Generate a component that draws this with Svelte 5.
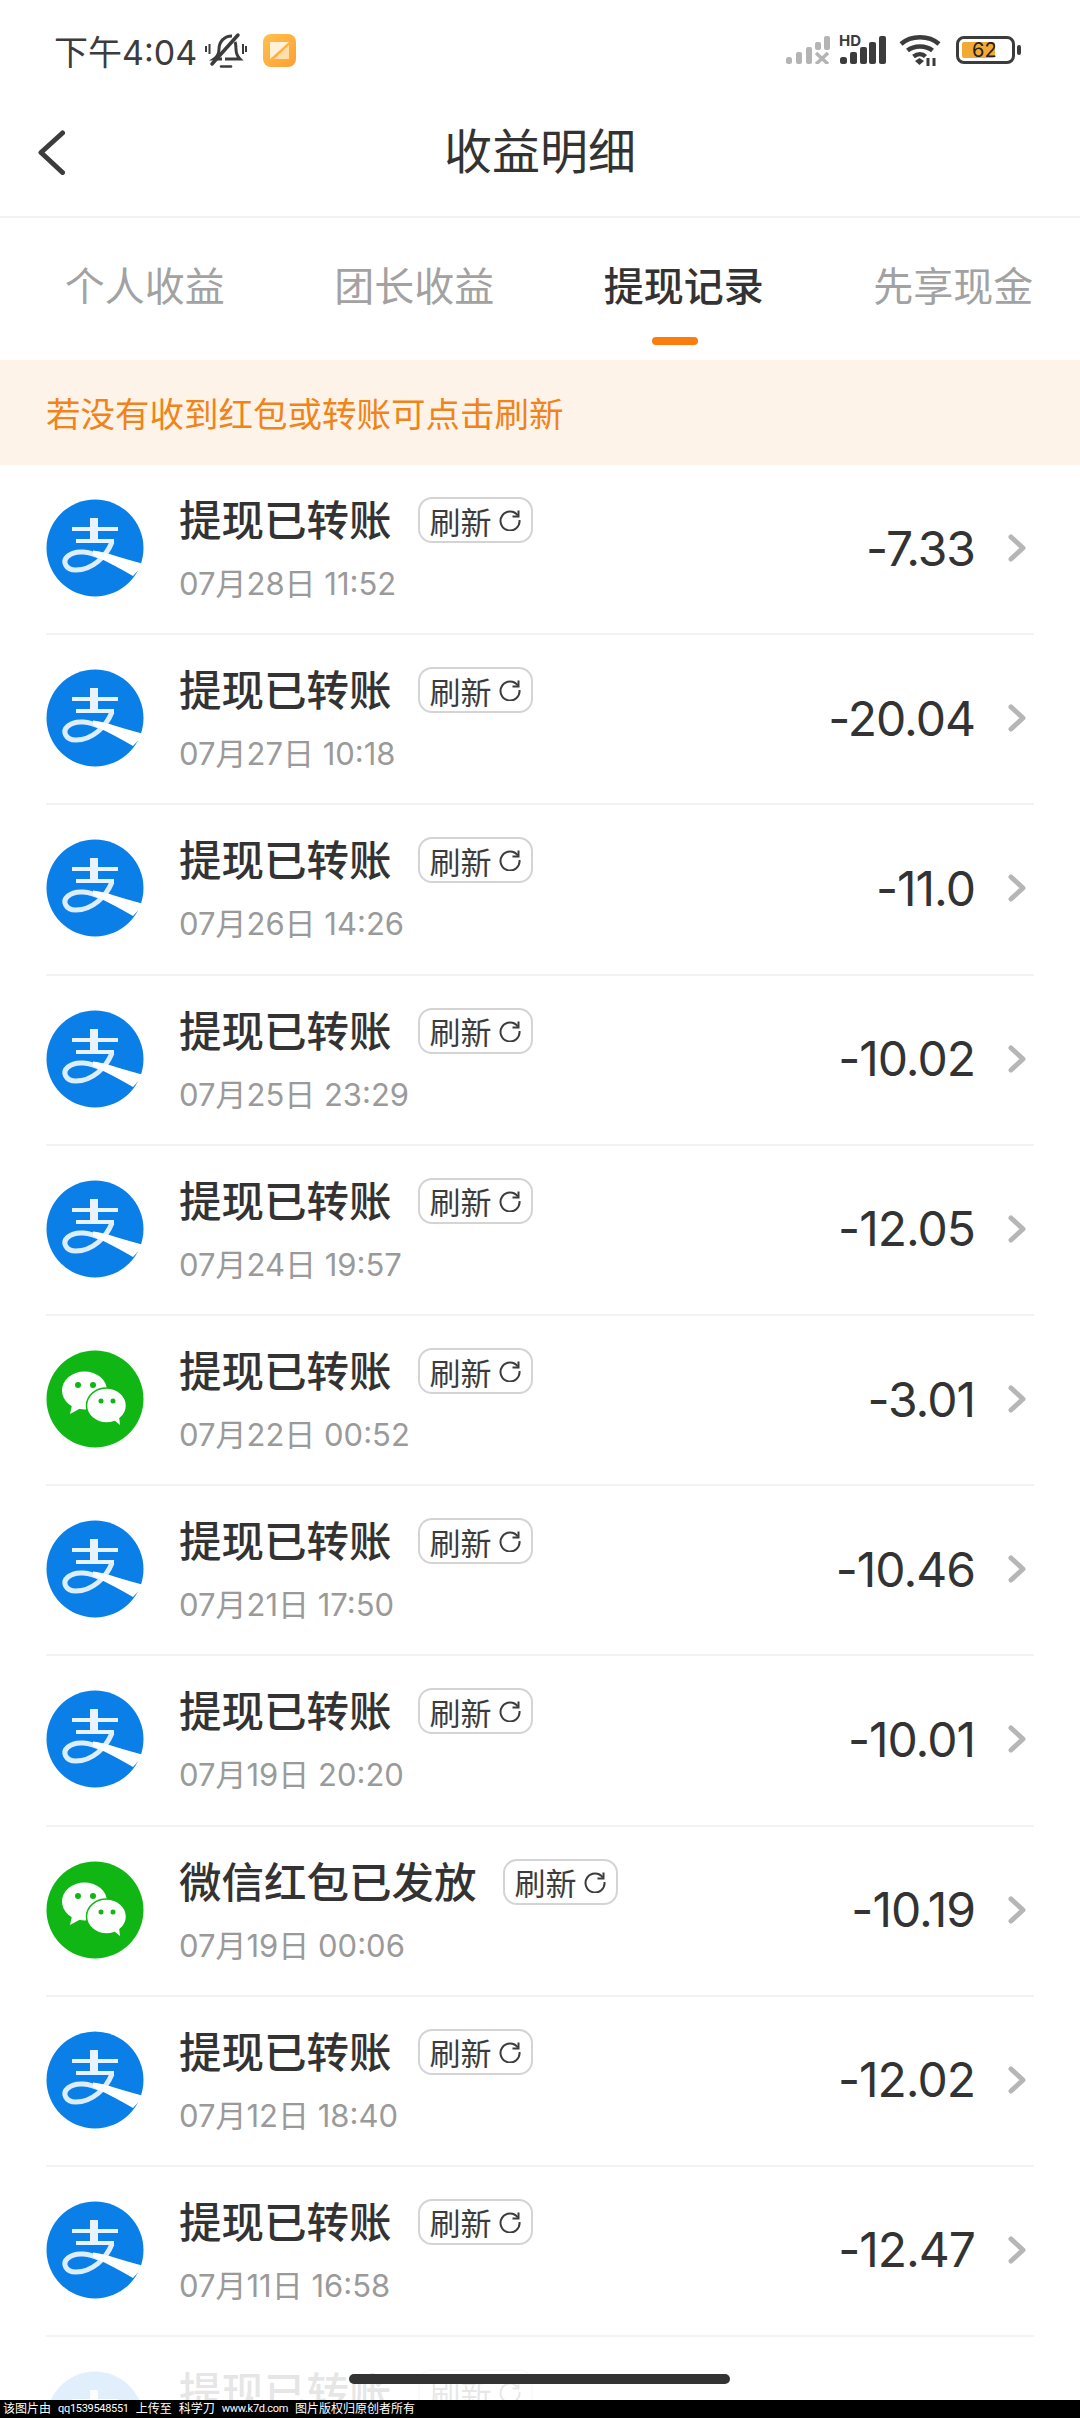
<script>
    const rows = [
        { pay: 'ali', title: '提现已转账', date: '07月28日 11:52', amount: '-7.33' },
        { pay: 'ali', title: '提现已转账', date: '07月27日 10:18', amount: '-20.04' },
        { pay: 'ali', title: '提现已转账', date: '07月26日 14:26', amount: '-11.0' },
        { pay: 'ali', title: '提现已转账', date: '07月25日 23:29', amount: '-10.02' },
        { pay: 'ali', title: '提现已转账', date: '07月24日 19:57', amount: '-12.05' },
        { pay: 'wx', title: '提现已转账', date: '07月22日 00:52', amount: '-3.01' },
        { pay: 'ali', title: '提现已转账', date: '07月21日 17:50', amount: '-10.46' },
        { pay: 'ali', title: '提现已转账', date: '07月19日 20:20', amount: '-10.01' },
        { pay: 'wx', title: '微信红包已发放', date: '07月19日 00:06', amount: '-10.19' },
        { pay: 'ali', title: '提现已转账', date: '07月12日 18:40', amount: '-12.02' },
        { pay: 'ali', title: '提现已转账', date: '07月11日 16:58', amount: '-12.47' },
        { pay: 'ali', title: '提现已转账', date: '', amount: '' } // runs off the bottom of the screen
    ];
    const tabs = ['个人收益', '团长收益', '提现记录', '先享现金'];
</script>

<div class="page">
    <div class="status">
        <span class="time">下午4:04</span>
        <svg class="bell" width="42" height="36" viewBox="0 0 42 36" fill="none" stroke="#3c3c3c">
            <path d="M17 27H9c3-2 5-5 5-10 0-7 5-13 13-13" stroke-width="3"/>
            <path d="M30 10c1 2 1 4 1 7 0 5 2 8 4 10H20" stroke-width="3"/>
            <path d="M33 3 7 32" stroke-width="3.500" stroke-linecap="round"/>
            <path d="M16 34.500h10" stroke-width="2.500" stroke-linecap="round"/>
            <path d="M1 14v6M4.500 12v10M38 12v10M41 14v6" stroke-width="2"/>
        </svg>
        <svg class="note" width="33" height="33" viewBox="0 0 33 33">
            <defs><linearGradient id="noteBg" x1="0" y1="0" x2="1" y2="1"><stop offset="0" stop-color="#ffc04d"/><stop offset="1" stop-color="#ff9f33"/></linearGradient></defs>
            <rect width="33" height="33" rx="8" fill="url(#noteBg)"/>
            <path d="M7 8h19L7 25z" fill="#fff2d8"/>
            <path d="M26 11v14H11z" fill="#ffe0ac"/>
        </svg>
        <span class="spacer"></span>
        <svg class="sig" width="44" height="28" viewBox="0 0 44 28" fill="#b4b4b4">
            <rect x="0" y="21" width="6" height="7" rx="2.500"/>
            <rect x="10" y="16" width="6" height="12" rx="2"/>
            <rect x="20" y="11" width="6" height="17" rx="2"/>
            <rect x="29" y="6" width="6" height="8" rx="2"/>
            <rect x="38" y="0" width="6" height="14" rx="2"/>
            <path d="M30 17 42 28M42 17 30 28" stroke="#b4b4b4" stroke-width="3.500"/>
        </svg>
        <span class="hd-wrap">
            <span class="hd">HD</span>
            <svg width="46" height="28" viewBox="0 0 46 28" fill="#3c3c3c">
                <rect x="0" y="21" width="7" height="7" rx="2.500"/>
                <rect x="10" y="16" width="7" height="12" rx="2"/>
                <rect x="20" y="11" width="7" height="17" rx="2"/>
                <rect x="29" y="6" width="7" height="22" rx="2"/>
                <rect x="39" y="0" width="7" height="28" rx="2"/>
            </svg>
        </span>
        <svg class="wifi" width="42" height="32" viewBox="0 0 42 32" fill="none" stroke="#3c3c3c" stroke-width="4.500">
            <path d="M2 10C12 1 30 1 40 10"/>
            <path d="M8.500 16.500C15 11 27 11 33.500 16.500"/>
            <path d="M14.500 22.500c4-3 9-3 12 0"/>
            <path d="M16 27l4.500-3 4.500 3-4.500 4z" fill="#3c3c3c" stroke="none"/>
            <path d="M29 32v-8M35 32v-8" stroke-width="3"/>
        </svg>
        <span class="battery"><span class="fill"></span><span class="pct">62</span></span>
        <span class="nub"></span>
    </div>

    <div class="nav">
        <svg class="back" width="27" height="45" viewBox="0 0 27 45" fill="none" stroke="#3c3c3c" stroke-width="5" stroke-linecap="round" stroke-linejoin="round"><path d="M24.500 3 3 22.500 24.500 42.500"/></svg>
        <span class="nav-title">收益明细</span>
    </div>

    <div class="tabs">
        {#each tabs as t, i}
            <div class="tab" class:active={i === 2}>
                <span>{t}</span>
                {#if i === 2}<i class="bar"></i>{/if}
            </div>
        {/each}
    </div>

    <div class="banner">若没有收到红包或转账可点击刷新</div>

    <div class="list">
        {#each rows as r}
            <div class="row">
                {#if r.pay === 'ali'}
                    <svg class="logo" width="98" height="98" viewBox="0 0 98 98">
                        <circle cx="49" cy="49" r="48.500" fill="#0a7fe8"/>
                        <path d="M26 30H72M30 42H68M48 19V43" stroke="#e8f3fd" stroke-width="4" fill="none"/>
                        <path d="M48 19V42" stroke="#e8f3fd" stroke-width="8" fill="none"/>
                        <path d="M66 43C60 58 46 71 30 71 19 71 16 62 22 57 30 50 44 53 55 58" stroke="#dcedfc" stroke-width="5" fill="none"/>
                        <path d="M47 51.500C60 53 78 60 98 65L87 77C75 70 62 63 47 56z" fill="#fff"/>
                    </svg>
                {:else}
                    <svg class="logo" width="98" height="98" viewBox="0 0 98 98">
                        <circle cx="49" cy="49" r="48.500" fill="#10b614"/>
                        <ellipse cx="38.500" cy="40.500" rx="22.500" ry="19" fill="#fff"/>
                        <path d="M26 55 24 64 35 58z" fill="#fff"/>
                        <ellipse cx="60.500" cy="55.500" rx="20" ry="17.500" fill="#fff" stroke="#10b614" stroke-width="1.500"/>
                        <path d="M68 70 74 75 73 66z" fill="#fff"/>
                        <circle cx="32" cy="35" r="3" fill="#10b614"/>
                        <circle cx="47" cy="35" r="3" fill="#10b614"/>
                        <circle cx="55" cy="51" r="2.500" fill="#10b614"/>
                        <circle cx="67" cy="51" r="2.500" fill="#10b614"/>
                    </svg>
                {/if}
                <div class="info">
                    <div class="line">
                        <span class="title">{r.title}</span>
                        <span class="refresh">刷新
                            <svg width="22" height="22" viewBox="0 0 22 22" fill="none" stroke="#3c3c3c" stroke-width="2"><path d="M18.800 6.500A9.500 9.500 0 1 0 20.500 11"/><path d="M19.500 1.500V7.500H13.500" stroke-width="2"/></svg>
                        </span>
                    </div>
                    <div class="date">{r.date}</div>
                </div>
                <span class="amount">{r.amount}</span>
                <svg class="chev" width="18" height="28" viewBox="0 0 18 28" fill="none" stroke="#b6b6b6" stroke-width="5" stroke-linecap="round" stroke-linejoin="round"><path d="M3 3 15 14 3 25"/></svg>
            </div>
        {/each}
    </div>

    <div class="fade"></div>
    <div class="gesture"></div>
    <div class="mark">
        <span>该图片由</span>
        <span class="latin">qq1539548551</span>
        <span>上传至</span>
        <span>科学刀</span>
        <span class="latin">www.k7d.com</span>
        <span>图片版权归原创者所有</span>
    </div>
</div>

<style>
    :global(body) {
        margin: 0;
        background: #fff;
    }
    .page {
        position: relative;
        width: 1080px;
        height: 2418px;
        overflow: hidden;
        background: #fff;
        font-family: Inter, "Noto Sans CJK SC", sans-serif;
        color: #333;
    }
    .status {
        display: flex;
        align-items: center;
        height: 100px;
        padding: 0 59px 0 54px;
        box-sizing: border-box;
        color: #3c3c3c;
    }
    .time {
        font-size: 34px;
        width: 151px;
        white-space: nowrap;
    }
    .note {
        margin-left: 16px;
    }
    .spacer {
        flex: 1;
    }
    .hd-wrap {
        position: relative;
        display: flex;
        margin-left: 10px;
    }
    .hd {
        position: absolute;
        left: -1px;
        top: -2px;
        font-size: 15px;
        font-weight: 700;
        line-height: 14px;
    }
    .wifi {
        margin-left: 13px;
    }
    .battery {
        position: relative;
        display: block;
        width: 59px;
        height: 28px;
        margin-left: 15px;
        border: 3px solid #3c3c3c;
        border-radius: 8px;
        box-sizing: border-box;
    }
    .fill {
        position: absolute;
        left: 3px;
        top: 3px;
        bottom: 3px;
        width: 33px;
        background: #f0aa35;
        border-radius: 2px;
    }
    .pct {
        position: absolute;
        left: 13px;
        top: 0;
        font-size: 20px;
        line-height: 22px;
        color: #222;
    }
    .nub {
        width: 4px;
        height: 10px;
        margin-left: 2px;
        background: #3c3c3c;
        border-radius: 2px;
    }
    .nav {
        position: relative;
        display: flex;
        align-items: center;
        justify-content: center;
        height: 95px;
        padding-bottom: 21px;
        border-bottom: 2px solid #f3f3f3;
    }
    .back {
        position: absolute;
        left: 38px;
        top: 30px;
    }
    .nav-title {
        font-size: 48px;
        color: #333;
    }
    .tabs {
        display: grid;
        grid-template-columns: repeat(4, 269.500px);
        padding: 0 10px;
        height: 142px;
    }
    .tab {
        display: flex;
        flex-direction: column;
        align-items: center;
        padding-top: 42px;
        font-size: 40px;
        line-height: 54px;
        color: #a2a2a2;
    }
    .tab.active {
        color: #333;
        font-weight: 500;
    }
    .bar {
        display: block;
        width: 46px;
        height: 8px;
        margin: 23px 18px 0 0;
        border-radius: 4px;
        background: #fb7d0e;
    }
    .banner {
        display: flex;
        align-items: center;
        height: 103px;
        padding: 0 0 2px 46px;
        background: #fef3e9;
        color: #f08319;
        font-size: 34.500px;
    }
    .row {
        display: flex;
        align-items: center;
        height: 170.200px;
        margin: 0 46px;
        padding-bottom: 2px;
        border-bottom: 2px solid #f3f3f3;
        box-sizing: border-box;
    }
    .logo {
        flex-shrink: 0;
    }
    .info {
        flex: 1;
        margin: 3px 0 0 35px;
    }
    .line {
        display: flex;
        align-items: center;
        height: 50px;
    }
    .title {
        font-size: 42.500px;
        line-height: 50px;
        font-weight: 500;
        color: #333;
    }
    .refresh {
        display: flex;
        align-items: center;
        gap: 7px;
        height: 46px;
        margin: -2px 0 0 26px;
        padding: 0 10px;
        border: 2px solid #d4d4d4;
        border-radius: 14px;
        box-sizing: border-box;
        font-size: 31px;
        color: #3c3c3c;
    }
    .date {
        min-height: 38px;
        margin-top: 19px;
        font-size: 31px;
        line-height: 38px;
        color: #9a9a9a;
    }
    .amount {
        font-size: 48px;
        letter-spacing: -1px;
        color: #333;
    }
    .chev {
        margin: 0 8px 0 33px;
    }
    .fade {
        position: absolute;
        left: 0;
        right: 0;
        top: 2338px;
        height: 62px;
        background: rgba(255, 255, 255, 0.88);
    }
    .gesture {
        position: absolute;
        left: 349px;
        top: 2374px;
        width: 381px;
        height: 10px;
        border-radius: 5px;
        background: #333;
    }
    .mark {
        position: absolute;
        left: 0;
        right: 0;
        bottom: 0;
        display: flex;
        gap: 7px;
        height: 18px;
        padding-left: 3px;
        background: #000;
        color: #fff;
        font-size: 12px;
        line-height: 18px;
    }
    .latin {
        font-family: Roboto, sans-serif;
        font-size: 11px;
        letter-spacing: -0.300px;
    }
</style>
